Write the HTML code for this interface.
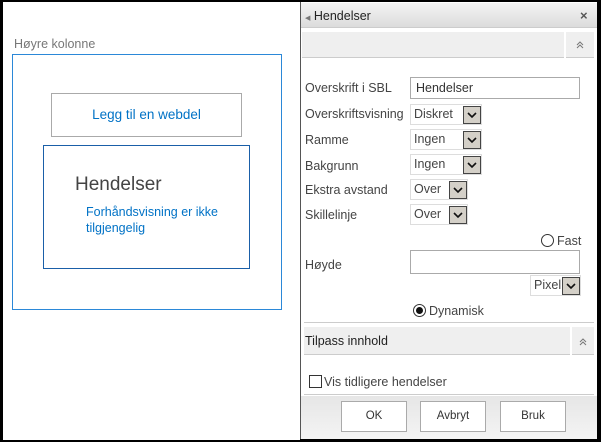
<!DOCTYPE html>
<html><head><meta charset="utf-8"><style>
*{margin:0;padding:0;box-sizing:border-box}
body{width:601px;height:442px;background:#000;position:relative;overflow:hidden;font-family:"Liberation Sans",sans-serif;font-size:12.5px;color:#444}
.a{position:absolute}
.sel{position:absolute;height:21px;border:1px solid #ddd;background:#fff;font-size:12.5px;color:#444;padding:1px 3px;line-height:17px}
.sel .b{position:absolute;right:0;top:1px;width:18px;height:18px;background:#d4d0c8;border:1px solid #444}
.sel .b svg{position:absolute;left:3px;top:4px}
.btn{position:absolute;top:401px;height:31px;background:#fff;border:1px solid #aaa;text-align:center;line-height:29px;font-size:11.5px;color:#333}
.cv{position:absolute;text-align:center}
.cv svg{margin-top:9px}
</style></head><body>
<div class="a" style="left:3px;top:2px;width:297px;height:438px;background:#fff"></div>
<div class="a" style="left:14px;top:37px;color:#777;font-size:12.5px">Høyre kolonne</div>
<div class="a" style="left:12px;top:54px;width:270px;height:256px;border:1px solid #2b88d8"></div>
<div class="a" style="left:51px;top:93px;width:191px;height:44px;border:1px solid #aaa;color:#0072c6;font-size:13.5px;text-align:center;line-height:42px">Legg til en webdel</div>
<div class="a" style="left:43px;top:145px;width:207px;height:124px;border:1px solid #1a5fa8"></div>
<div class="a" style="left:75px;top:174px;font-size:19px;color:#444">Hendelser</div>
<div class="a" style="left:86px;top:204px;color:#0072c6;font-size:12.5px;line-height:16px">Forhåndsvisning er ikke<br>tilgjengelig</div>

<div class="a" style="left:300px;top:2px;width:297px;height:437px;background:#fff;border-left:1px solid #555"></div>
<div class="a" style="left:301px;top:3px;width:296px;height:25px;background:linear-gradient(#f4f4f4,#dcdcdc);border-bottom:1px solid #ccc"></div>
<div class="a" style="left:305px;top:9px;font-size:12.5px;color:#222"><span style="font-size:7px;color:#777">◀</span> Hendelser</div>
<div class="a" style="left:580px;top:8px;font-size:13px;color:#555;font-weight:bold">×</div>
<div class="a" style="left:302px;top:32px;width:262px;height:26px;background:#efefef;border-bottom:1px solid #ccc"></div>
<div class="cv" style="left:566px;top:32px;width:28px;height:26px;background:#efefef;border-bottom:1px solid #ccc"><svg width="8" height="8"><path d="M1 4 L4 1 L7 4 M1 7 L4 4 L7 7" stroke="#777" stroke-width="1" fill="none"/></svg></div>

<div class="a" style="left:305px;top:81px">Overskrift i SBL</div>
<div class="a" style="left:410px;top:77px;width:170px;height:22px;border:1px solid #aaa;padding:3px 5px;font-size:12.5px;color:#333">Hendelser</div>
<div class="a" style="left:305px;top:107px">Overskriftsvisning</div>
<div class="sel" style="left:410px;top:104px;width:72px">Diskret<div class="b"><svg width="10" height="8"><path d="M1 2 L5 6 L9 2" stroke="#111" stroke-width="1.6" fill="none"/></svg></div></div>
<div class="a" style="left:305px;top:133px">Ramme</div>
<div class="sel" style="left:410px;top:129px;width:72px">Ingen<div class="b"><svg width="10" height="8"><path d="M1 2 L5 6 L9 2" stroke="#111" stroke-width="1.6" fill="none"/></svg></div></div>
<div class="a" style="left:305px;top:159px">Bakgrunn</div>
<div class="sel" style="left:410px;top:154px;width:72px">Ingen<div class="b"><svg width="10" height="8"><path d="M1 2 L5 6 L9 2" stroke="#111" stroke-width="1.6" fill="none"/></svg></div></div>
<div class="a" style="left:305px;top:183px">Ekstra avstand</div>
<div class="sel" style="left:410px;top:179px;width:58px">Over<div class="b"><svg width="10" height="8"><path d="M1 2 L5 6 L9 2" stroke="#111" stroke-width="1.6" fill="none"/></svg></div></div>
<div class="a" style="left:305px;top:208px">Skillelinje</div>
<div class="sel" style="left:410px;top:204px;width:58px">Over<div class="b"><svg width="10" height="8"><path d="M1 2 L5 6 L9 2" stroke="#111" stroke-width="1.6" fill="none"/></svg></div></div>

<div class="a" style="left:541px;top:234px;width:13px;height:13px;border:1px solid #333;border-radius:50%"></div>
<div class="a" style="left:557px;top:234px">Fast</div>
<div class="a" style="left:305px;top:258px">Høyde</div>
<div class="a" style="left:410px;top:250px;width:170px;height:24px;border:1px solid #aaa"></div>
<div class="sel" style="left:530px;top:275px;width:51px">Pixel<div class="b"><svg width="10" height="8"><path d="M1 2 L5 6 L9 2" stroke="#111" stroke-width="1.6" fill="none"/></svg></div></div>
<div class="a" style="left:413px;top:304px;width:13px;height:13px;border:1px solid #333;border-radius:50%"><div style="position:absolute;left:2px;top:2px;width:7px;height:7px;background:#111;border-radius:50%"></div></div>
<div class="a" style="left:429px;top:304px">Dynamisk</div>
<div class="a" style="left:304px;top:322px;width:290px;height:1px;background:#ccc"></div>
<div class="a" style="left:304px;top:327px;width:266px;height:28px;background:#efefef;border-bottom:1px solid #ccc;padding-left:1px;line-height:28px;color:#222;font-size:12.5px">Tilpass innhold</div>
<div class="cv" style="left:572px;top:327px;width:22px;height:28px;background:#efefef;border-bottom:1px solid #ccc"><svg width="8" height="8" style="margin-top:11px"><path d="M1 4 L4 1 L7 4 M1 7 L4 4 L7 7" stroke="#777" stroke-width="1" fill="none"/></svg></div>
<div class="a" style="left:309px;top:375px;width:13px;height:13px;border:1px solid #333"></div>
<div class="a" style="left:324px;top:375px">Vis tidligere hendelser</div>
<div class="a" style="left:304px;top:394px;width:290px;height:1px;background:#ccc"></div>
<div class="a" style="left:301px;top:396px;width:296px;height:43px;background:linear-gradient(#e6e6e6,#f4f4f4)"></div>
<div class="btn" style="left:341px;width:66px">OK</div>
<div class="btn" style="left:420px;width:66px">Avbryt</div>
<div class="btn" style="left:500px;width:66px">Bruk</div>
</body></html>
